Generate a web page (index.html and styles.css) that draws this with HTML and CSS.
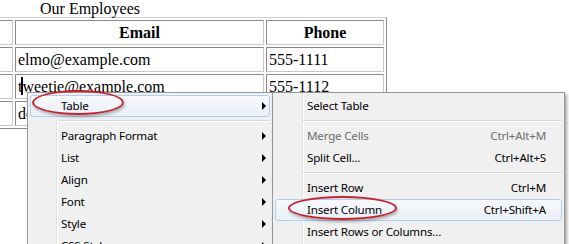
FILE: index.html
```html
<!DOCTYPE html>
<html>
<head>
<meta charset="utf-8">
<link rel="stylesheet" href="styles.css">
</head>
<body>
<div class="page">
  <div class="caption">Our Employees</div>
  <table class="emp">
    <colgroup>
      <col class="c-name">
      <col class="c-email">
      <col class="c-phone">
    </colgroup>
    <tr><th></th><th>Email</th><th>Phone</th></tr>
    <tr><td></td><td>elmo@example.com</td><td>555-1111</td></tr>
    <tr><td></td><td>tweetie@example.com</td><td>555-1112</td></tr>
    <tr><td></td><td>dorothy@example.com</td><td>555-1113</td></tr>
  </table>
  <span class="caret"></span>
</div>

<div class="menu menu-main">
  <div class="item hl"><span class="label">Table</span><span class="arrow"></span></div>
  <div class="sep"></div>
  <div class="item"><span class="label">Paragraph Format</span><span class="arrow"></span></div>
  <div class="item"><span class="label">List</span><span class="arrow"></span></div>
  <div class="item"><span class="label">Align</span><span class="arrow"></span></div>
  <div class="item"><span class="label">Font</span><span class="arrow"></span></div>
  <div class="item"><span class="label">Style</span><span class="arrow"></span></div>
  <div class="item"><span class="label">CSS Styles</span><span class="arrow"></span></div>
</div>

<div class="menu menu-sub">
  <div class="item"><span class="label">Select Table</span></div>
  <div class="sep"></div>
  <div class="item disabled"><span class="label">Merge Cells</span><span class="key">Ctrl+Alt+M</span></div>
  <div class="item"><span class="label">Split Cell...</span><span class="key">Ctrl+Alt+S</span></div>
  <div class="sep"></div>
  <div class="item"><span class="label">Insert Row</span><span class="key">Ctrl+M</span></div>
  <div class="item hl"><span class="label">Insert Column</span><span class="key">Ctrl+Shift+A</span></div>
  <div class="item"><span class="label">Insert Rows or Columns...</span></div>
</div>

<div class="ring ring-table"></div>
<div class="ring ring-col"></div>
</body>
</html>
```

FILE: styles.css
```css
html, body {
  margin: 0;
  padding: 0;
  background: #fff;
  overflow: hidden;
}
body {
  width: 569px;
  height: 244px;
  position: relative;
  font-family: "Liberation Serif", "Times New Roman", serif;
  font-size: 16px;
  color: #000;
}
.page {
  position: relative;
}
.caption {
  line-height: 17px;
  padding-left: 40px;
}
.emp {
  margin-left: -40px;
  border-collapse: separate;
  border-spacing: 2px;
  table-layout: fixed;
  width: 427px;
  border: 1px solid;
  border-color: #d0d0d0 #8a8a8a #8a8a8a #d0d0d0;
}
.c-name { width: 50px; }
.c-email { width: 249px; }
.c-phone { width: 118px; }
.emp th, .emp td {
  border: 1px solid;
  border-color: #8a8a8a #c8c8c8 #c8c8c8 #8a8a8a;
  padding: 2px;
  line-height: 19px;
  height: 19px;
  white-space: nowrap;
  overflow: hidden;
}
.emp th {
  font-weight: bold;
  text-align: center;
}
.emp td {
  text-align: left;
}
.caret {
  position: absolute;
  left: 21px;
  top: 77px;
  width: 2px;
  height: 18px;
  background: #000;
}

/* context menus */
.menu {
  position: absolute;
  top: 92px;
  height: 180px;
  box-sizing: border-box;
  padding: 2px;
  background: #f0f0f0;
  border: 1px solid #979797;
  box-shadow: 2px 2px 3px rgba(0, 0, 0, 0.35);
  font-family: "Segoe UI", "Noto Sans", "Open Sans", sans-serif;
  font-size: 11.6px;
  letter-spacing: -0.2px;
  color: #000;
}
.menu::before {
  content: "";
  position: absolute;
  top: 0;
  bottom: 0;
  left: 28px;
  width: 1px;
  background: #e2e3e3;
  border-right: 1px solid #fff;
}
.menu-main {
  left: 27px;
  width: 246px;
}
.menu-sub {
  left: 272px;
  width: 293px;
}
.menu-sub::before {
  left: 29px;
}
.item {
  position: relative;
  display: flex;
  align-items: center;
  height: 22px;
  box-sizing: border-box;
  border: 1px solid transparent;
  border-radius: 3px;
  padding-left: 30px;
  padding-right: 3px;
  padding-bottom: 1px;
}
.menu-sub .item {
  padding-left: 31px;
  padding-right: 15px;
}
.item.hl {
  border-color: #aecff0;
  background: linear-gradient(#f7f9fc, #eaf0f8);
}
.label {
  flex: 1;
  white-space: nowrap;
}
.key {
  white-space: nowrap;
}
.disabled {
  color: #6d6d6d;
}
.arrow {
  width: 0;
  height: 0;
  border-left: 4px solid #000;
  border-top: 4px solid transparent;
  border-bottom: 4px solid transparent;
}
.sep {
  position: relative;
  height: 8px;
  margin-left: 28px;
  z-index: 1;
}
.sep::after {
  content: "";
  position: absolute;
  left: 0;
  right: 0;
  top: 3px;
  height: 1px;
  background: #d7d7d7;
  border-bottom: 1px solid #fff;
}

/* red annotation ellipses */
.ring {
  position: absolute;
  border: 2px solid #c3232a;
  border-radius: 50%;
  box-shadow: 1px 2px 3px rgba(0, 0, 0, 0.3);
  box-sizing: border-box;
}
.ring-table {
  left: 32px;
  top: 90px;
  width: 92px;
  height: 25px;
}
.ring-col {
  left: 288px;
  top: 196px;
  width: 109px;
  height: 24px;
}
```
